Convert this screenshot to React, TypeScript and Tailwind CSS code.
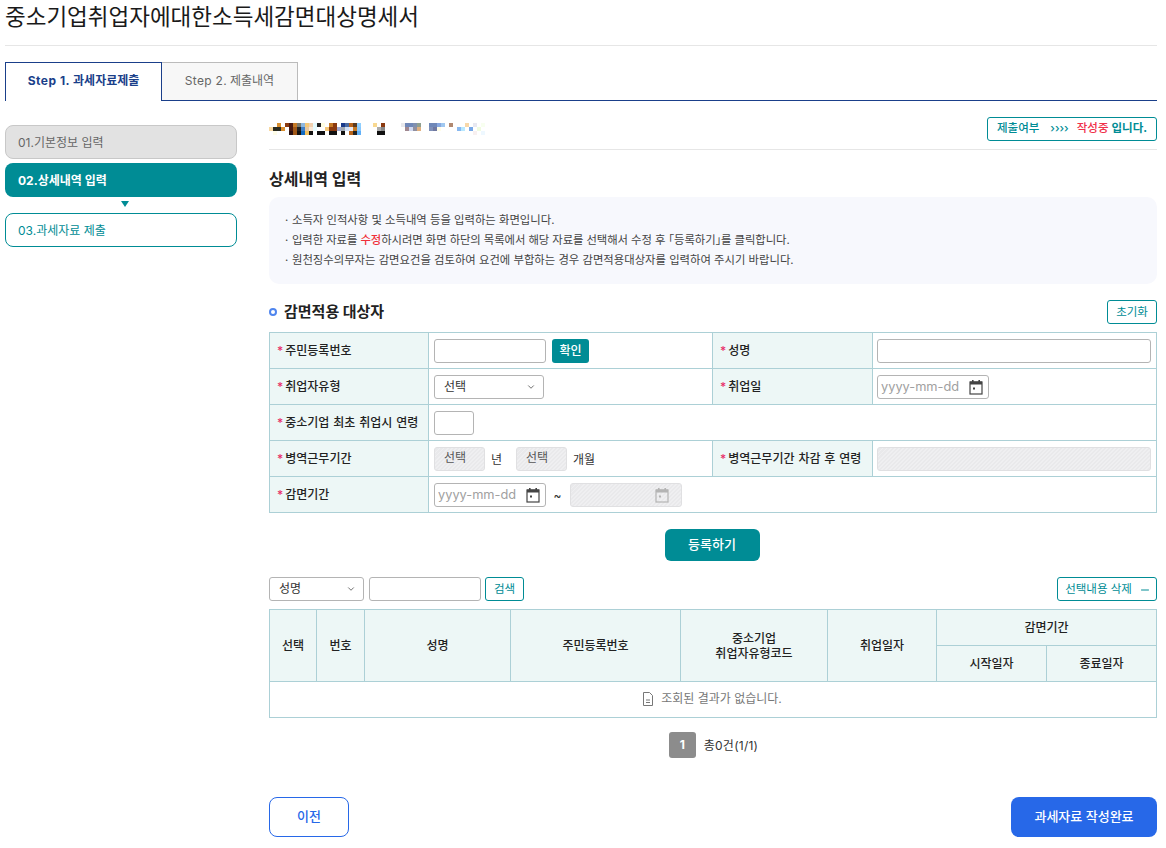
import { ChevronDown, Minus } from "lucide-react"
import type { ReactNode } from "react"

const mosaic: [number, number, string][] = [
  [2, 0, "#d98f30"], [4, 0, "#8b3a10"], [5, 0, "#4a1a10"], [6, 0, "#c67a25"], [7, 0, "#7a7a70"], [8, 0, "#8fb8e0"], [9, 0, "#f5c878"], [10, 0, "#f0d0b0"], [11, 0, "#e5fbff"], [12, 0, "#222222"], [13, 0, "#fffde0"], [15, 0, "#c67a25"], [16, 0, "#8b3a10"], [18, 0, "#1a3a8a"], [19, 0, "#4a6aa0"], [20, 0, "#b8641a"], [21, 0, "#5a3a20"], [22, 0, "#90d0ff"], [26, 0, "#f8d890"], [28, 0, "#8b3a10"], [33, 0, "#e8e8ec"], [34, 0, "#7088b8"], [35, 0, "#7088b8"], [36, 0, "#8090b0"], [37, 0, "#90a090"], [40, 0, "#7088b8"], [41, 0, "#7088b8"], [42, 0, "#88a8e0"], [43, 0, "#a0c8f0"], [45, 0, "#b08870"], [49, 0, "#f8d8a8"], [51, 0, "#e8e8f0"], [53, 0, "#f8fff0"],
  [0, 1, "#f8d8a0"], [1, 1, "#2a2a20"], [2, 1, "#2a2a20"], [3, 1, "#d98f30"], [5, 1, "#4a1a10"], [6, 1, "#a05818"], [7, 1, "#222222"], [8, 1, "#4080c8"], [9, 1, "#e8c8a0"], [10, 1, "#f8e8d8"], [11, 1, "#e5fbff"], [14, 1, "#f5c878"], [15, 1, "#8b3a10"], [16, 1, "#8b3a10"], [17, 1, "#a0a8d0"], [18, 1, "#a0a8b0"], [19, 1, "#d0e0f8"], [20, 1, "#e8e8f0"], [21, 1, "#c67a25"], [22, 1, "#88c8ff"], [27, 1, "#aaaaaa"], [28, 1, "#888888"], [34, 1, "#a08890"], [35, 1, "#d0d8f0"], [36, 1, "#9090a0"], [37, 1, "#e0b080"], [40, 1, "#8090b8"], [41, 1, "#7078a0"], [42, 1, "#fffde8"], [47, 1, "#88b8f0"], [48, 1, "#b8e8ff"], [50, 1, "#78a8e8"], [52, 1, "#f0fbe0"],
  [1, 2, "#fffde8"], [5, 2, "#2a1010"], [6, 2, "#a05818"], [7, 2, "#111111"], [8, 2, "#1068c0"], [9, 2, "#f0c060"], [10, 2, "#111111"], [12, 2, "#111111"], [13, 2, "#111111"], [15, 2, "#111111"], [16, 2, "#111111"], [18, 2, "#111111"], [20, 2, "#b8641a"], [21, 2, "#222222"], [22, 2, "#60b0f8"], [27, 2, "#111111"], [28, 2, "#111111"], [51, 2, "#f8f0f0"], [53, 2, "#eef8ff"],
]

function Label({ children }: { children: ReactNode }) {
  return (
    <th className="bg-[#edf7f6] border border-[#acd0d6] pl-[7px] pt-[1px] text-left text-[12px] font-medium text-[#222] [word-spacing:0.7px]">
      <span className="text-[#e8306a] mr-[2px]">*</span>
      {children}
    </th>
  )
}

function Calendar({ dim }: { dim?: boolean }) {
  return (
    <svg viewBox="0 0 14 16" className={dim ? "w-[14px] h-[16px] text-[#b4b4b4]" : "w-[14px] h-[16px] text-[#444]"} fill="none">
      <rect x="1" y="3" width="12" height="12" stroke="currentColor" strokeWidth="1.2" />
      <rect x="1" y="2.5" width="12" height="3" fill="currentColor" />
      <rect x="3" y="1" width="1.6" height="2" fill="currentColor" />
      <rect x="9.4" y="1" width="1.6" height="2" fill="currentColor" />
      <rect x="4" y="8.5" width="2" height="2" fill="currentColor" />
    </svg>
  )
}

const hatch = "bg-[repeating-linear-gradient(135deg,#efeff1_0px,#efeff1_1.41px,#e9e9eb_1.41px,#e9e9eb_2.83px)]"

function DateField({ disabled }: { disabled?: boolean }) {
  return (
    <div className={disabled ? "w-[112px] h-[24px] flex items-center justify-end pr-[12px] rounded-[3px] border border-[#e0e0e2] " + hatch : "w-[112px] h-[24px] flex items-center justify-between pl-[3px] pr-[5px] rounded-[3px] border border-[#b4b4b4] bg-white"}>
      {!disabled && <input placeholder="yyyy-mm-dd" className="w-[85px] pt-[1px] text-[12.8px] outline-none placeholder:text-[#a0a0a0]" />}
      <Calendar dim={disabled} />
    </div>
  )
}

function Select({ value, width }: { value: string; width: string }) {
  return (
    <div className={width + " h-[24px] flex items-center justify-between pl-[9px] pr-[7px] rounded-[3px] border border-[#b4b4b4] bg-white text-[12px] text-[#333]"}>
      <span>{value}</span>
      <ChevronDown className="w-[10px] h-[10px] text-[#555]" strokeWidth={2} />
    </div>
  )
}

function DisabledPick() {
  return <div className={"w-[51px] h-[24px] pl-[9px] pt-[1px] rounded-[3px] border border-[#e0e0e2] text-[12px] text-[#555] " + hatch}>선택</div>
}

const cell = "border border-[#acd0d6] px-[5px]"
const inputBox = "h-[24px] block rounded-[3px] border border-[#b4b4b4] bg-white outline-none"
const outlineBtn = "h-[24px] pt-[1px] rounded-[3px] border border-[#008c95] bg-white text-[11.5px] text-[#008c95]"
const th = "border border-[#acd0d6] bg-[#edf7f6] text-center text-[12px] leading-[15px] font-medium text-[#222]"

export default function App() {
  return (
    <div className="w-[1166px] h-[848px] overflow-hidden bg-white pl-[5px] font-['Inter','Noto_Sans_CJK_KR',sans-serif]">
      <div className="w-[1152px]">
        <div className="h-[46px] border-b border-[#e6e6e6]">
          <h1 className="text-[22.5px] leading-[34px] text-[#1a1a1a] font-normal">중소기업취업자에대한소득세감면대상명세서</h1>
        </div>

        {/* Tabs */}
        <div className="mt-[16px] h-[39px] flex border-b border-[#1a3f8a]">
          <div className="w-[157px] h-[39px] flex items-center justify-center pb-[3px] bg-white border border-b-0 border-[#1a3f8a] text-[12px] font-bold text-[#1a3f8a]">
            <span className="tracking-[0.5px] mr-[3px]">Step 1.</span>과세자료제출
          </div>
          <div className="w-[136px] h-[38px] flex items-center justify-center pb-[1px] bg-[#f7f7f7] border border-l-0 border-b-0 border-[#bbbbbb] text-[12px] text-[#666]">
            <span className="tracking-[0.3px] mr-[3px]">Step 2.</span>제출내역
          </div>
        </div>

        <div className="flex gap-[32px]">
          {/* Side steps */}
          <div className="w-[232px] mt-[24px] flex flex-col text-[12px]">
            <div className="h-[34px] flex items-center pl-[12px] pt-[1px] rounded-[8px] border border-[#c8c8c8] bg-[#e2e2e2] text-[#666]">01.기본정보 입력</div>
            <div className="h-[34px] mt-[4px] flex items-center pl-[13px] pt-[1px] rounded-[8px] bg-[#008c95] font-bold text-white">02.상세내역 입력</div>
            <div className="h-[16px] flex items-center justify-center pl-[8px] pb-[2px]">
              <div className="w-0 h-0 border-x-[4px] border-x-transparent border-t-[6px] border-t-[#008c95]" />
            </div>
            <div className="h-[34px] flex items-center pl-[12px] pt-[1px] rounded-[8px] border border-[#008c95] bg-white text-[#008c95]">03.과세자료 제출</div>
          </div>

          {/* Main */}
          <div className="w-[888px] mt-[16px]">
            <div className="flex items-center justify-between pb-[8px] border-b border-[#e6e6e6]">
              <svg width="216" height="12" shapeRendering="crispEdges">
                {mosaic.map(([x, y, c]) => <rect key={x + "-" + y} x={x * 4} y={y * 4} width="4" height="4" fill={c} />)}
              </svg>
              <div className="w-[170px] h-[24px] flex items-center pl-[9px] rounded-[3px] border border-[#008c95] text-[11.5px] font-medium text-[#008c95]">
                <span>제출여부</span>
                <span className="ml-[11px] mr-[8px]">››››</span>
                <span className="text-[#f0304a]">작성중</span>
                <span className="ml-[3px] font-bold">입니다.</span>
              </div>
            </div>

            <h2 className="mt-[17px] text-[16px] leading-[24px] font-bold text-[#222]">상세내역 입력</h2>

            <div className="mt-[6px] h-[87px] pt-[13px] pl-[16px] rounded-[10px] bg-[#f7f8fd] text-[11.35px] leading-[20px] text-[#444]">
              <p><span className="inline-block w-[7px]">·</span>소득자 인적사항 및 소득내역 등을 입력하는 화면입니다.</p>
              <p className="tracking-[-0.07px]"><span className="inline-block w-[7px]">·</span>입력한 자료를 <span className="text-[#f0303a] font-medium">수정</span>하시려면 화면 하단의 목록에서 해당 자료를 선택해서 수정 후 ｢등록하기｣를 클릭합니다.</p>
              <p><span className="inline-block w-[7px]">·</span>원천징수의무자는 감면요건을 검토하여 요건에 부합하는 경우 감면적용대상자를 입력하여 주시기 바랍니다.</p>
            </div>

            <div className="mt-[16px] h-[24px] flex items-center justify-between">
              <div className="flex items-center">
                <span className="w-[8px] h-[8px] rounded-full border-2 border-[#4f85ee]" />
                <h3 className="ml-[7px] text-[15px] leading-[22px] pb-[1px] font-bold text-[#222]">감면적용 대상자</h3>
              </div>
              <button className={outlineBtn + " w-[50px]"}>초기화</button>
            </div>

            {/* Form */}
            <table className="mt-[8px] w-full table-fixed border-collapse">
              <colgroup>
                <col className="w-[159px]" />
                <col className="w-[284px]" />
                <col className="w-[160px]" />
                <col />
              </colgroup>
              <tbody>
                <tr className="h-[36px]">
                  <Label>주민등록번호</Label>
                  <td className={cell}>
                    <div className="flex gap-[6px]">
                      <input className={inputBox + " w-[112px]"} />
                      <button className="w-[37px] h-[24px] pt-[1px] rounded-[3px] bg-[#008c95] text-[12px] font-medium text-white">확인</button>
                    </div>
                  </td>
                  <Label>성명</Label>
                  <td className={cell}><input className={inputBox + " w-[274px] -ml-[1px]"} /></td>
                </tr>
                <tr className="h-[36px]">
                  <Label>취업자유형</Label>
                  <td className={cell}><Select value="선택" width="w-[110px]" /></td>
                  <Label>취업일</Label>
                  <td className={cell}><div className="-ml-[1px]"><DateField /></div></td>
                </tr>
                <tr className="h-[36px]">
                  <Label>중소기업 최초 취업시 연령</Label>
                  <td className={cell} colSpan={3}><input className={inputBox + " w-[40px]"} /></td>
                </tr>
                <tr className="h-[36px]">
                  <Label>병역근무기간</Label>
                  <td className={cell}>
                    <div className="flex items-center text-[12px] text-[#333]">
                      <DisabledPick />
                      <span className="ml-[6px] mr-[14px] pt-[3px]">년</span>
                      <DisabledPick />
                      <span className="ml-[6px] pt-[3px]">개월</span>
                    </div>
                  </td>
                  <Label>병역근무기간 차감 후 연령</Label>
                  <td className={cell}><div className={"w-[274px] h-[24px] -ml-[1px] rounded-[3px] border border-[#e0e0e2] " + hatch} /></td>
                </tr>
                <tr className="h-[36px]">
                  <Label>감면기간</Label>
                  <td className={cell} colSpan={3}>
                    <div className="flex items-center text-[12px] text-[#333]">
                      <DateField />
                      <span className="w-[24px] pr-[1px] pt-[2px] text-center">~</span>
                      <DateField disabled />
                    </div>
                  </td>
                </tr>
              </tbody>
            </table>

            <div className="mt-[16px] flex justify-center pr-[2px]">
              <button className="w-[95px] h-[32px] rounded-[6px] bg-[#008c95] text-[13px] font-medium text-white">등록하기</button>
            </div>

            {/* Search */}
            <div className="mt-[16px] flex items-center">
              <Select value="성명" width="w-[95px]" />
              <input className={inputBox + " w-[112px] ml-[5px]"} />
              <button className={outlineBtn + " w-[39px] ml-[4px]"}>검색</button>
              <button className={outlineBtn + " w-[100px] pl-[2px] ml-auto flex items-center justify-center gap-[7px]"}>
                선택내용 삭제
                <Minus className="w-[12px] h-[12px]" strokeWidth={2} />
              </button>
            </div>

            {/* List */}
            <table className="mt-[8px] w-full table-fixed border-collapse">
              <colgroup>
                <col className="w-[47px]" />
                <col className="w-[48px]" />
                <col className="w-[146px]" />
                <col className="w-[170px]" />
                <col className="w-[147px]" />
                <col className="w-[109px]" />
                <col className="w-[110px]" />
                <col />
              </colgroup>
              <thead>
                <tr className="h-[36px]">
                  <th rowSpan={2} className={th}>선택</th>
                  <th rowSpan={2} className={th}>번호</th>
                  <th rowSpan={2} className={th}>성명</th>
                  <th rowSpan={2} className={th}>주민등록번호</th>
                  <th rowSpan={2} className={th}>중소기업<br />취업자유형코드</th>
                  <th rowSpan={2} className={th}>취업일자</th>
                  <th colSpan={2} className={th}>감면기간</th>
                </tr>
                <tr className="h-[36px]">
                  <th className={th}>시작일자</th>
                  <th className={th}>종료일자</th>
                </tr>
              </thead>
              <tbody>
                <tr className="h-[36px]">
                  <td colSpan={8} className="border border-[#acd0d6] pt-[2px] pr-[2px] text-center text-[12px] text-[#777]">
                    <span className="inline-flex items-center gap-[7px]">
                      <svg viewBox="0 0 12 14" className="w-[12px] h-[14px]" fill="none" stroke="#777" strokeWidth="1">
                        <path d="M1.5 .5h6l3 3v10h-9z" />
                        <path d="M4 8h4M4 10.5h4" />
                      </svg>
                      조회된 결과가 없습니다.
                    </span>
                  </td>
                </tr>
              </tbody>
            </table>

            <div className="mt-[14px] pl-[1px] flex items-center justify-center text-[12px] text-[#333]">
              <span className="w-[27px] h-[26px] flex items-center justify-center rounded-[3px] bg-[#8c8c8c] font-bold text-white">1</span>
              <span className="ml-[8px] pt-[1px] tracking-[0.25px]">총0건(1/1)</span>
            </div>

            <div className="mt-[39px] flex justify-between">
              <button className="w-[80px] h-[40px] rounded-[8px] border border-[#2768e8] bg-white text-[13px] font-medium text-[#2768e8]">이전</button>
              <button className="w-[146px] h-[40px] rounded-[8px] bg-[#2768e8] text-[13px] font-medium text-white">과세자료 작성완료</button>
            </div>
          </div>
        </div>
      </div>
    </div>
  )
}
